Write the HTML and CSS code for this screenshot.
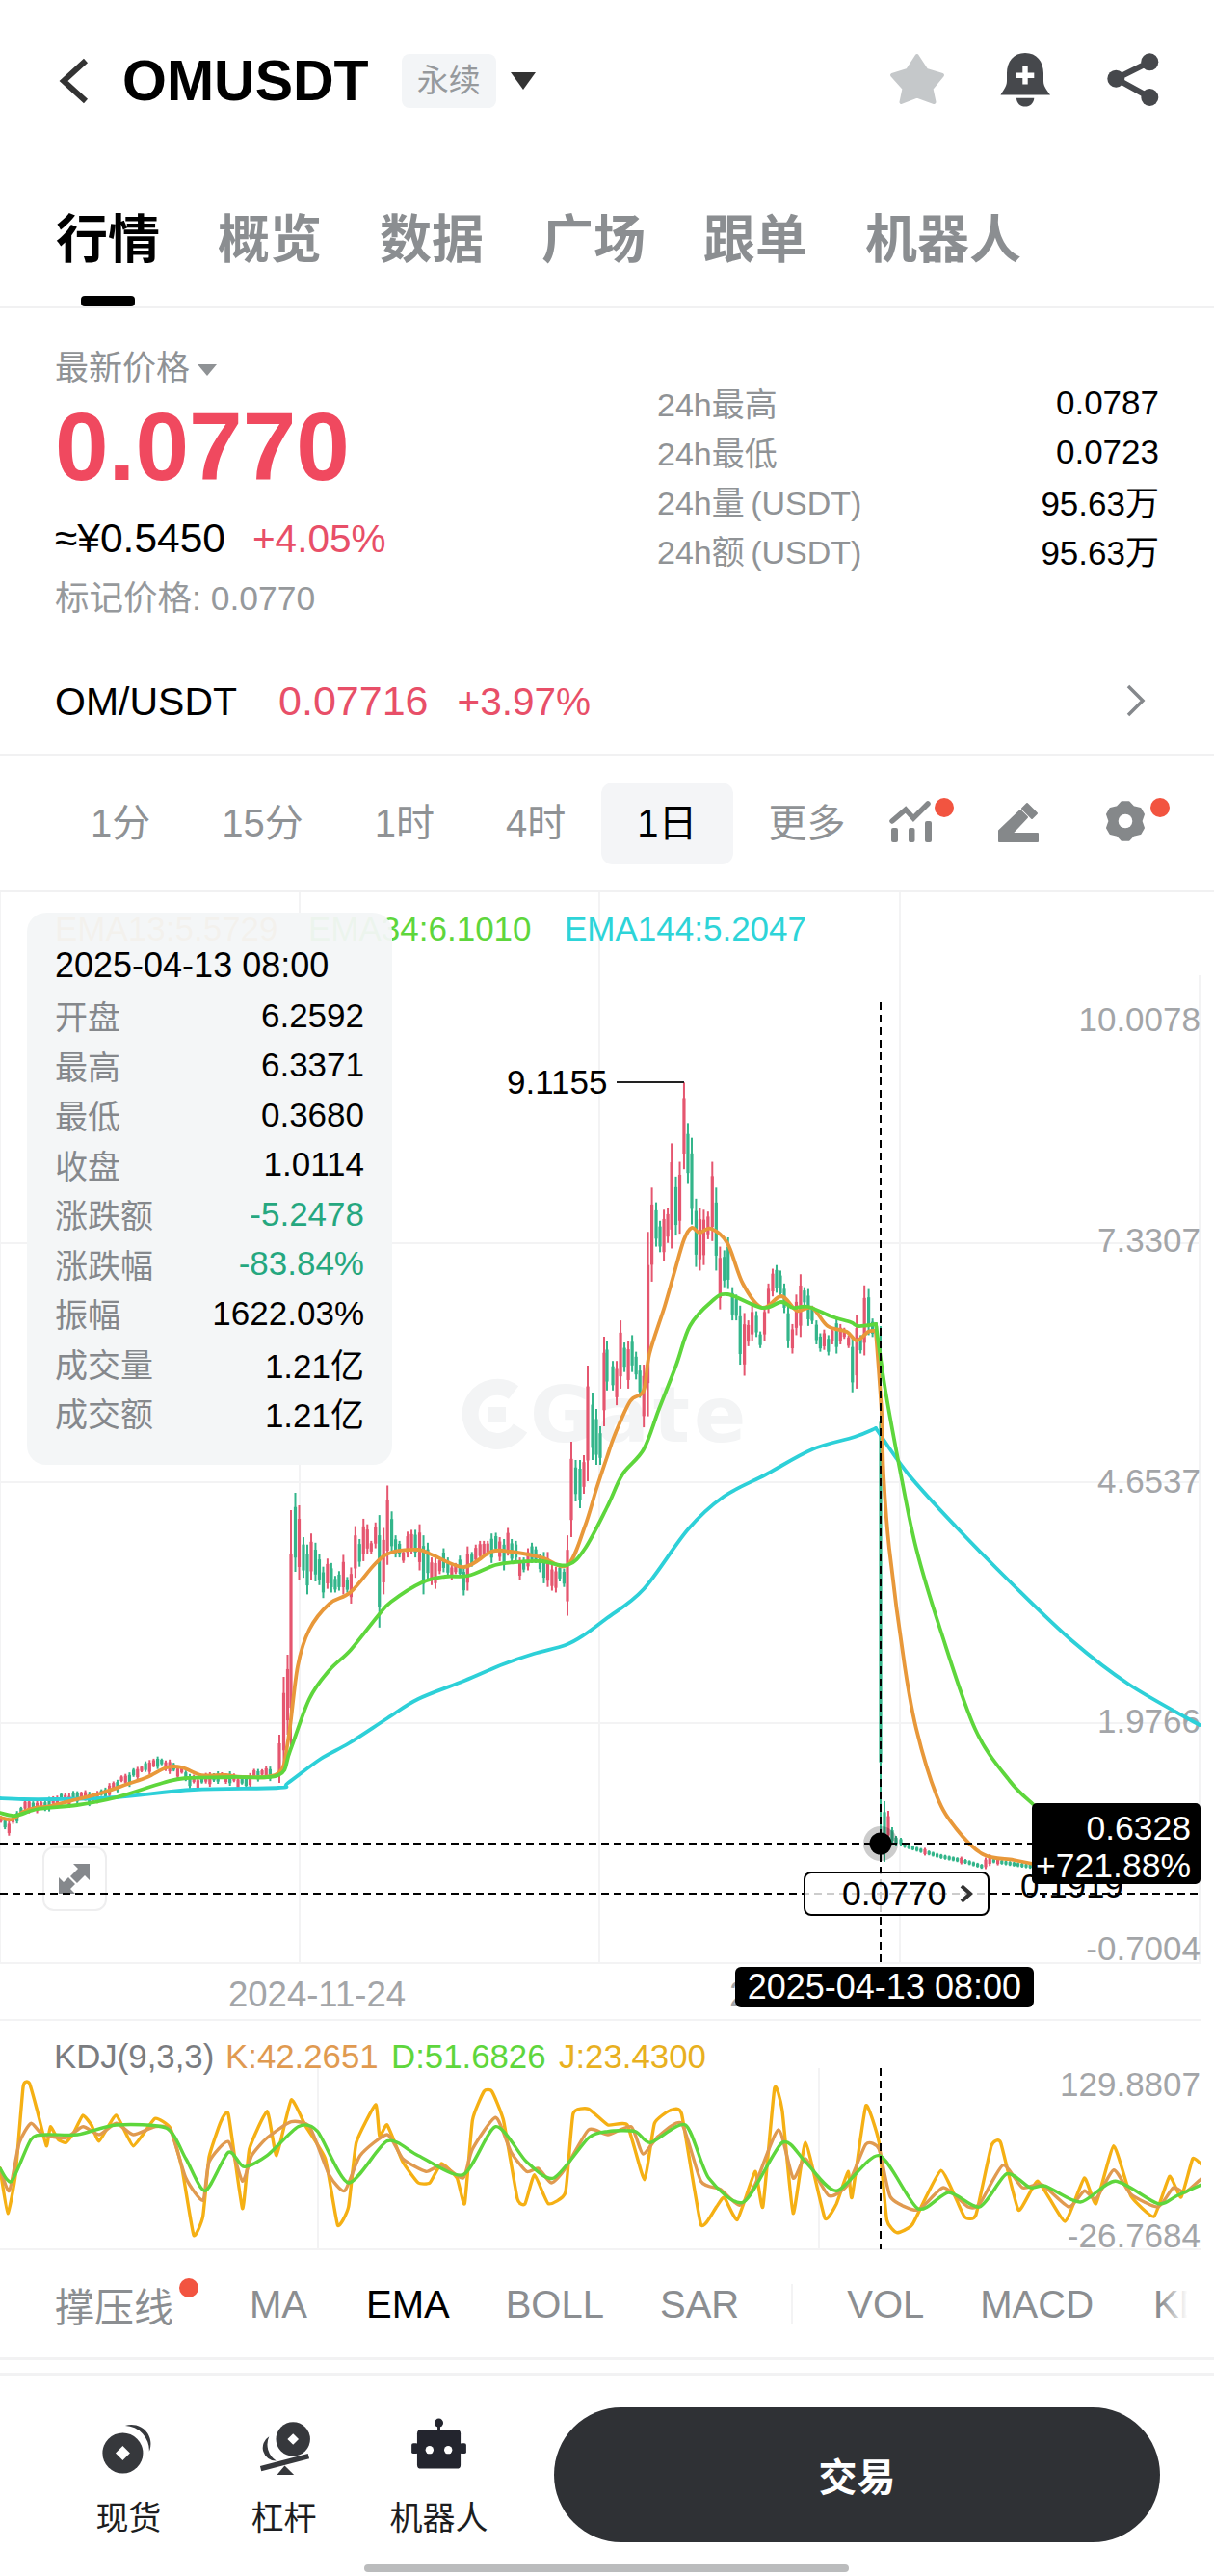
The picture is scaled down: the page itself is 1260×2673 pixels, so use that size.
FILE: index.html
```html
<!DOCTYPE html>
<html lang="zh-CN">
<head>
    <meta charset="UTF-8">
    <meta name="viewport" content="width=device-width, initial-scale=1.0">
    <title>OMUSDT</title>
    <link rel="stylesheet" href="styles.css">
</head>
<body>
<div class="page">

    <header class="topbar">
        <svg class="back" viewBox="0 0 34 50"><polyline points="29,4 6,25 29,46"/></svg>
        <span class="symbol">OMUSDT</span>
        <span class="badge">永续</span>
        <span class="caret"></span>
        <div class="top-icons">
            <svg class="ico-star" viewBox="921 54 60 60"><path d="M951.7 58 L961.5 73 L978 78 L966.500 92 L969.500 106 L951.700 99.700 L935.500 106 L938.500 92 L926 78 L942 73 Z"/></svg>
            <svg class="ico-bell" viewBox="1038 54 54 60"><path d="M1064 55 C1076 55 1083 64 1083 76 V84 C1083 90 1087 94 1090 98.500 H1038.500 C1041 94 1045 90 1045 84 V76 C1045 64 1052 55 1064 55 Z"/><path d="M1055 101.700 H1073.300 C1073 107 1069 110.500 1064 110.500 C1059 110.500 1055 107 1055 101.700 Z"/><path class="plus" d="M1061.300 69 H1066.700 V75.600 H1073.300 V81 H1066.700 V87.600 H1061.300 V81 H1054.700 V75.600 H1061.300 Z"/></svg>
            <svg class="ico-share" viewBox="1149 54 54 60"><polyline points="1193.300,64.300 1158.300,81.700 1193.300,101"/><circle cx="1193.300" cy="64.300" r="9"/><circle cx="1193.300" cy="101" r="9"/><circle cx="1158.300" cy="81.700" r="9"/></svg>
        </div>
    </header>

    <nav class="tabs">
        <a class="tab active">行情</a>
        <a class="tab">概览</a>
        <a class="tab">数据</a>
        <a class="tab">广场</a>
        <a class="tab">跟单</a>
        <a class="tab">机器人</a>
    </nav>

    <section class="quote">
        <div class="quote-left">
            <div class="latest-label">最新价格<span class="mini-caret"></span></div>
            <div class="last-price">0.0770</div>
            <div class="fiat"><span>≈¥0.5450</span><span class="up fiat-change">+4.05%</span></div>
            <div class="mark">标记价格: 0.0770</div>
        </div>
        <dl class="stats">
            <div class="stat"><dt>24h最高</dt><dd>0.0787</dd></div>
            <div class="stat"><dt>24h最低</dt><dd>0.0723</dd></div>
            <div class="stat"><dt>24h量 (USDT)</dt><dd>95.63万</dd></div>
            <div class="stat"><dt>24h额 (USDT)</dt><dd>95.63万</dd></div>
        </dl>
    </section>

    <section class="spot">
        <span class="spot-name">OM/USDT</span>
        <span class="spot-price up">0.07716</span>
        <span class="spot-change up">+3.97%</span>
        <svg class="spot-arrow" viewBox="0 0 22 36"><polyline points="3,3 18,18 3,33"/></svg>
    </section>

    <section class="frames">
        <span class="frame">1分</span>
        <span class="frame">15分</span>
        <span class="frame">1时</span>
        <span class="frame">4时</span>
        <span class="frame current">1日</span>
        <span class="frame">更多</span>
        <div class="frame-tools">
            <span class="tool dotted">
                <svg viewBox="0 0 48 48"><polyline class="zig" points="4,22 18,10 26,19 41,4"/><rect x="3" y="29" width="7" height="15" rx="2"/><rect x="21" y="29" width="6.500" height="15" rx="2"/><rect x="38" y="22" width="7" height="22" rx="2"/></svg>
            </span>
            <span class="tool">
                <svg viewBox="0 0 48 48"><path class="soft" d="M3 32 L25 11 L32 18 L16 35 H43 V43 H3 Z"/><path class="soft" d="M32 4 L42 14 L37 19 L27 9 Z"/></svg>
            </span>
            <span class="tool dotted">
                <svg viewBox="0 0 48 48"><polygon class="soft" points="18.400,2.300 25.600,2.300 30.300,7.300 37.600,9 41,15 38.600,22 41,29 37.600,35 30.300,36.700 25.600,41.700 18.400,41.700 13.700,36.700 6.400,35 3,29 5.400,22 3,15 6.400,9 13.700,7.300"/><circle class="hole" cx="22" cy="22" r="7.300"/></svg>
            </span>
        </div>
    </section>

    <section class="chart">
        <svg id="plot" class="plot" viewBox="0 926 1260 1410">
            <defs>
                <clipPath id="kdjClip"><rect x="0" y="2096" width="1246" height="238"/></clipPath>
            </defs>
            <g id="grid" class="grid"></g>
            <g class="watermark">
                <path d="M533 1445 A28 28 0 1 0 540 1482" />
                <rect x="507" y="1460" width="18" height="16"/>
                <text x="550" y="1496">Gate</text>
            </g>
            <text class="legend c-orange" x="57" y="976">EMA13:5.5729</text>
            <text class="legend c-green" x="320" y="976">EMA34:6.1010</text>
            <text class="legend c-cyan" x="586" y="976">EMA144:5.2047</text>

            <text class="axis" x="1246" y="1070">10.0078</text>
            <text class="axis" x="1246" y="1299">7.3307</text>
            <text class="axis" x="1246" y="1549">4.6537</text>
            <text class="axis" x="1246" y="1798">1.9766</text>
            <text class="axis" x="1246" y="2034">-0.7004</text>
            <text class="axis" x="1246" y="2175">129.8807</text>
            <text class="axis" x="1246" y="2332">-26.7684</text>
            <text class="date-axis" x="237" y="2082">2024-11-24</text>
            <text class="date-axis" x="757" y="2082">2</text>

            <g id="candles"></g>
            <g id="lines"></g>
            <g id="kdjLines" clip-path="url(#kdjClip)"></g>

            <text class="peak" x="526" y="1135">9.1155</text>
            <line class="peak-line" x1="640" y1="1123" x2="710" y2="1123"/>
            <text class="peak" x="1059" y="1969">0.1919</text>

            <line class="cross" x1="914" y1="1040" x2="914" y2="2037"/>
            <line class="cross" x1="914" y1="2146" x2="914" y2="2334"/>

            <g class="expand">
                <rect x="45" y="1917" width="65" height="65" rx="11"/>
                <path d="M93 1934 V1951 L88 1946 L80 1954 L73 1947 L81 1939 L76 1934 Z"/>
                <path d="M61 1965 V1948 L66 1953 L71 1948 L78 1955 L73 1960 L78 1965 Z"/>
            </g>
            <line class="cross" x1="0" y1="1913" x2="1245" y2="1913"/>
            <line class="cross" x1="0" y1="1965" x2="1245" y2="1965"/>

            <circle class="halo" cx="914" cy="1913" r="18"/>
            <circle cx="914" cy="1913" r="11.500"/>

            <rect class="price-box" x="835" y="1943" width="191" height="44" rx="7"/>
            <text class="peak tag-num" x="874" y="1977">0.0770</text>
            <polyline class="price-arrow" points="998,1957 1007,1965 998,1973"/>

            <rect x="1071" y="1871" width="175" height="84" rx="5"/>
            <text class="tag" x="1236" y="1909">0.6328</text>
            <text class="tag" x="1236" y="1948">+721.88%</text>

            <rect x="763" y="2041" width="310" height="42" rx="6"/>
            <text class="tag tag-date" x="1060" y="2074">2025-04-13 08:00</text>

            <text class="legend kdj c-kdj" x="56" y="2146">KDJ(9,3,3)</text>
            <text class="legend kdj c-k" x="234" y="2146">K:42.2651</text>
            <text class="legend kdj c-green" x="406" y="2146">D:51.6826</text>
            <text class="legend kdj c-j" x="580" y="2146">J:23.4300</text>
        </svg>

        <div class="detail">
            <div class="detail-date">2025-04-13 08:00</div>
            <div class="detail-row"><span>开盘</span><b>6.2592</b></div>
            <div class="detail-row"><span>最高</span><b>6.3371</b></div>
            <div class="detail-row"><span>最低</span><b>0.3680</b></div>
            <div class="detail-row"><span>收盘</span><b>1.0114</b></div>
            <div class="detail-row"><span>涨跌额</span><b class="down">-5.2478</b></div>
            <div class="detail-row"><span>涨跌幅</span><b class="down">-83.84%</b></div>
            <div class="detail-row"><span>振幅</span><b>1622.03%</b></div>
            <div class="detail-row"><span>成交量</span><b>1.21亿</b></div>
            <div class="detail-row"><span>成交额</span><b>1.21亿</b></div>
        </div>
    </section>

    <section class="indicators">
        <span class="ind ind-first">撑压线</span>
        <span class="ind ind-ma">MA</span>
        <span class="ind selected">EMA</span>
        <span class="ind">BOLL</span>
        <span class="ind">SAR</span>
        <span class="ind-line"></span>
        <span class="ind">VOL</span>
        <span class="ind">MACD</span>
        <span class="ind ind-last">KDJ</span>
        <span class="ind-fade"></span>
    </section>
    <div class="spacer"></div>

    <footer class="bottom">
        <div class="actions">
            <a class="action">
                <svg viewBox="0 0 60 64"><circle cx="23.200" cy="38.700" r="21.700"/><path class="hole" d="M23.200 31 L30.900 38.700 L23.200 46.400 L15.500 38.700 Z"/><path d="M25.800 9.300 A20.700 20.700 0 0 1 51.500 37 A26.700 26.700 0 0 0 25.800 9.300 Z"/></svg>
                <span>现货</span>
            </a>
            <a class="action">
                <svg viewBox="0 0 60 64"><circle cx="39.500" cy="23.700" r="18.300"/><path class="hole" d="M39.500 17.700 L45.500 23.700 L39.500 29.700 L33.500 23.700 Z"/><path d="M13.800 21 A14 14 0 0 0 21.500 47 A20.700 20.700 0 0 1 13.800 21 Z"/><line class="beam" x1="4.800" y1="55.300" x2="56.200" y2="42"/><polygon points="30.500,52 22.200,62 40.500,62"/></svg>
                <span>杠杆</span>
            </a>
            <a class="action robot">
                <svg viewBox="0 0 60 64"><circle cx="29.500" cy="6.300" r="4.700"/><rect x="28" y="8" width="3" height="7"/><rect x="6.200" y="13.700" width="46.600" height="41.600" rx="4"/><rect x="0.200" y="28" width="7" height="11.300" rx="2"/><rect x="51.800" y="28" width="7" height="11.300" rx="2"/><circle class="hole" cx="19.500" cy="35.300" r="4.300"/><circle class="hole" cx="39.500" cy="35.300" r="4.300"/></svg>
                <span>机器人</span>
            </a>
        </div>
        <button class="trade">交易</button>
    </footer>
    <div class="home-bar"></div>

</div>
<script src="chart.js"></script>
</body>
</html>
```

FILE: styles.css
```css
*{
    margin: 0;
    padding: 0;
    box-sizing: border-box;
}

body{
    width: 1260px;
    height: 2673px;
    overflow: hidden;
    background: #fff;
    color: #000;
    font-family: "Liberation Sans", "Noto Sans CJK SC", sans-serif;
}

.page{
    width: 1260px;
    height: 2673px;
}

.up{ color: #e84f68; }
.down{ color: #25a77f; }

/* top bar */
.topbar{
    height: 168px;
    display: flex;
    align-items: center;
    padding: 0 57px 0 60px;
}
.back{
    width: 34px;
    height: 50px;
    fill: none;
    stroke: #333;
    stroke-width: 6;
}
.symbol{
    margin-left: 33px;
    font-size: 59px;
    font-weight: bold;
}
.badge{
    margin-left: 34px;
    width: 98px;
    height: 56px;
    line-height: 56px;
    text-align: center;
    border-radius: 8px;
    background: #f3f5f7;
    color: #96999c;
    font-size: 33px;
}
.caret{
    margin-left: 15px;
    border-left: 13px solid transparent;
    border-right: 13px solid transparent;
    border-top: 18px solid #333;
}
.top-icons{
    margin-left: auto;
    display: flex;
    align-items: center;
    gap: 57px;
}
.ico-star{ width: 60px; height: 60px; fill: #c5c8ca; stroke: #c5c8ca; stroke-width: 4; stroke-linejoin: round; }
.ico-bell{ width: 54px; height: 60px; fill: #46484c; }
.ico-bell .plus{ fill: #fff; }
.ico-share{ width: 54px; height: 60px; fill: #46484c; stroke: none; }
.ico-share polyline{ fill: none; stroke: #46484c; stroke-width: 6; }

/* tabs */
.tabs{
    height: 152px;
    display: flex;
    gap: 60px;
    padding: 50px 0 0 58px;
    border-bottom: 2px solid #f1f1f2;
}
.tab{
    position: relative;
    height: 62px;
    line-height: 62px;
    font-size: 54px;
    font-weight: bold;
    color: #8b8e91;
}
.tab.active{ color: #000; }
.tab.active::after{
    content: "";
    position: absolute;
    left: 26px;
    top: 89px;
    width: 56px;
    height: 11px;
    border-radius: 4px;
    background: #000;
}

/* price block */
.quote{
    height: 358px;
    display: flex;
    justify-content: space-between;
    padding: 40px 57px 0;
}
.latest-label{
    height: 44px;
    line-height: 44px;
    font-size: 35px;
    color: #8f9295;
}
.mini-caret{
    display: inline-block;
    margin: 0 0 4px 8px;
    border-left: 10px solid transparent;
    border-right: 10px solid transparent;
    border-top: 12px solid #8f9295;
}
.last-price{
    height: 110px;
    margin-top: 4px;
    line-height: 110px;
    font-size: 100px;
    font-weight: bold;
    color: #f0495f;
}
.fiat{
    height: 50px;
    margin-top: 16px;
    line-height: 50px;
    font-size: 42.500px;
    display: flex;
    align-items: baseline;
    gap: 28px;
}
.fiat-change{ font-size: 40.500px; }
.mark{
    height: 44px;
    margin-top: 15px;
    line-height: 44px;
    font-size: 35.500px;
    color: #96999c;
}
.stats{
    width: 521px;
    padding-top: 32px;
}
.stat{
    height: 51px;
    display: flex;
    justify-content: space-between;
    align-items: center;
    font-size: 34px;
}
.stat dt{ color: #909396; word-spacing: -3px; }
.stat dd{ font-size: 35px; }

/* spot row */
.spot{
    height: 106px;
    display: flex;
    align-items: baseline;
    padding: 25px 70px 0 57px;
    font-size: 41px;
    border-bottom: 2px solid #f1f1f2;
}
.spot-price{ margin-left: 43px; font-size: 43px; }
.spot-change{ margin-left: 30px; font-size: 40.500px; }
.spot-arrow{
    margin-left: auto;
    width: 22px;
    height: 36px;
    align-self: flex-start;
    margin-top: 6px;
    fill: none;
    stroke: #85888c;
    stroke-width: 3.500;
}

/* time frames */
.frames{
    height: 142px;
    display: flex;
    align-items: center;
    padding-left: 57px;
    border-bottom: 2px solid #f1f1f2;
}
.frame{
    height: 85px;
    line-height: 85px;
    padding: 0 37px;
    font-size: 40px;
    color: #8f9295;
}
.frame.current{
    color: #000;
    background: #f4f5f7;
    border-radius: 12px;
}
.frame-tools{
    margin-left: auto;
    margin-right: 66px;
    display: flex;
    gap: 64px;
}
.tool{
    position: relative;
    width: 48px;
    height: 48px;
}
.tool svg{ width: 48px; height: 48px; fill: #85888a; }
.tool .zig{ fill: none; stroke: #85888a; stroke-width: 5.500; stroke-linecap: round; }
.tool .soft{ stroke: #85888a; stroke-width: 2; stroke-linejoin: round; }
.tool .hole{ fill: #fff; }
.dotted::after{
    content: "";
    position: absolute;
    right: -20px;
    top: -2px;
    width: 20px;
    height: 20px;
    border-radius: 50%;
    background: #f25440;
}

/* chart */
.chart{
    position: relative;
    height: 1410px;
}
.plot{
    position: absolute;
    left: 0;
    top: 0;
    width: 1260px;
    height: 1410px;
    font-family: "Liberation Sans", "Noto Sans CJK SC", sans-serif;
}
.grid line{ stroke: #f3f3f4; stroke-width: 2; }
.watermark{ fill: #f3f4f5; }
.watermark path{ fill: none; stroke: #f3f4f5; stroke-width: 17; }
.watermark text{ font-family: "DejaVu Sans", sans-serif; font-size: 80px; letter-spacing: 4px; font-weight: bold; }
.legend{ font-size: 35px; }
.legend.kdj{ font-size: 34.800px; }
.c-orange{ fill: #e8a03e; }
.c-green{ fill: #5ed63c; }
.c-cyan{ fill: #2dd4d8; }
.c-kdj{ fill: #7a7c80; }
.c-k{ fill: #e09a50; }
.c-j{ fill: #e8b020; }
.axis{ font-size: 35px; fill: #a3a5a8; text-anchor: end; }
.date-axis{ font-size: 36.500px; fill: #a3a5a8; }
.peak{ font-size: 35px; fill: #000; }
.tag-num{ font-size: 35.500px; }
.peak-line{ stroke: #222; stroke-width: 2; }
.cross{ stroke: #000; stroke-width: 2; stroke-dasharray: 8 5; }
.expand rect{ fill: #fff; stroke: #eeeeef; stroke-width: 2; }
.expand path{ fill: #85888c; }
.halo{ fill: rgba(0, 0, 0, 0.2); }
.price-box{ fill: rgba(255, 255, 255, 0.8); stroke: #000; stroke-width: 2; }
.price-arrow{ fill: none; stroke: #333; stroke-width: 4; }
.tag{ font-size: 35.500px; fill: #fff; text-anchor: end; }
.tag-date{ font-size: 36px; }

.detail{
    position: absolute;
    left: 28px;
    top: 21px;
    width: 379px;
    height: 573px;
    padding: 29px 29px 0;
    border-radius: 20px;
    background: rgba(243, 245, 247, 0.95);
}
.detail-date{
    height: 52px;
    line-height: 52px;
    font-size: 36px;
    white-space: nowrap;
}
.detail-row{
    height: 51.500px;
    display: flex;
    justify-content: space-between;
    align-items: center;
    font-size: 34px;
}
.detail-row span{ color: #85888c; }
.detail-row b{ font-weight: normal; font-size: 35px; }

/* indicator row */
.indicators{
    position: relative;
    height: 113px;
    display: flex;
    align-items: center;
    gap: 58px;
    padding-left: 57px;
    overflow: hidden;
    border-bottom: 3px solid #f2f2f3;
    font-size: 40px;
    color: #8b8e91;
}
.ind{ flex: none; }
.ind.selected{ color: #000; }
.ind-first{
    position: relative;
    margin-right: 21px;
    font-size: 41px;
}
.ind-ma{ margin-right: 3px; }
.ind-first::after{
    content: "";
    position: absolute;
    right: -26px;
    top: 3px;
    width: 20px;
    height: 20px;
    border-radius: 50%;
    background: #f25440;
}
.ind-line{
    flex: none;
    width: 2px;
    height: 42px;
    margin-left: -4px;
    margin-right: -2px;
    background: #f3f3f4;
}
.ind-last{ margin-left: 4px; }
.ind-fade{
    position: absolute;
    left: 1205px;
    top: 0;
    width: 55px;
    height: 100%;
    background: linear-gradient(to right, rgba(255, 255, 255, 0), #fff 50%);
}
.spacer{
    height: 16px;
    border-bottom: 3px solid #f2f2f3;
}

/* bottom bar */
.bottom{
    height: 173px;
    display: flex;
    padding: 33px 56px 0 53px;
}
.actions{ display: flex; }
.action{
    width: 161px;
    height: 140px;
    display: flex;
    flex-direction: column;
    align-items: center;
    font-size: 34px;
    color: #1c1d20;
}
.action svg{
    width: 60px;
    height: 64px;
    margin-top: 10px;
    fill: #36383c;
}
.action .hole{ fill: #fff; }
.action .beam{ stroke: #36383c; stroke-width: 5.500; }
.action.robot svg{ fill: #23252e; }
.action span{
    margin-top: 18px;
    line-height: 50px;
}
.trade{
    flex: 1;
    height: 140px;
    margin-left: 39px;
    border: none;
    border-radius: 70px;
    background: #2f3135;
    color: #fff;
    font-family: inherit;
    font-size: 40px;
    font-weight: bold;
}
.home-bar{
    width: 503px;
    height: 8px;
    margin: 23px 0 0 378px;
    border-radius: 4px;
    background: #bbbcbd;
}
```

FILE: chart.js
```js
var NS = "http://www.w3.org/2000/svg";
var RED = "#e5566f", GREEN = "#33b58a";

function add(parent, tag, attrs){
    var el = document.createElementNS(NS, tag);
    for(var k in attrs){ el.setAttribute(k, attrs[k]); }
    parent.appendChild(el);
    return el;
}

// grid
var grid = document.getElementById("grid");
[1290, 1538, 1788, 2037, 2096, 2334].forEach(function(y){
    add(grid, "line", {x1: 0, y1: y, x2: 1246, y2: y});
});
[0, 311, 622, 934].forEach(function(x){
    add(grid, "line", {x1: x, y1: 926, x2: x, y2: 2037});
});
add(grid, "line", {x1: 1245, y1: 1012, x2: 1245, y2: 2037});
[330, 850].forEach(function(x){
    add(grid, "line", {x1: x, y1: 2146, x2: x, y2: 2334});
});

// candles
var candles = document.getElementById("candles");
function bar(x, top, bottom, up){
    var color = up ? RED : GREEN;
    var h = bottom - top;
    add(candles, "rect", {x: x - 1, y: top, width: 2, height: h, fill: color});
    add(candles, "rect", {x: x - 1.6, y: top + h * 0.18, width: 3.2, height: h * 0.64, fill: color});
}

function lerp(points, x){
    for(var i = 1; i < points.length; i++){
        if(x <= points[i][0]){
            var a = points[i-1], b = points[i];
            return a[1] + (b[1] - a[1]) * (x - a[0]) / (b[0] - a[0]);
        }
    }
    return points[points.length-1][1];
}

// quiet start of the chart, numbers read off the picture
var startTop = [[0,1884],[10,1888],[28,1865],[40,1869],[60,1861],[84,1857],[100,1859],[120,1846],[133,1838],[161,1822],[177,1826],[205,1844],[217,1838],[241,1838],[253,1846],[261,1836],[281,1832]];
for(var i = 0; i < 68; i++){
    var sx = 1 + i * 4.17;
    var st = lerp(startTop, sx);
    var sh = 7 + (i * 7 % 5) * 2;
    bar(sx, st + (i % 3), st + (i % 3) + sh, (i * 5 % 7) < 4);
}

// first jump, x and y already on the page
[[290,1800,1850,1],[294.5,1740,1833,1],[298.5,1717,1800,1],[302,1567,1817,1],[306.5,1549,1631,0],[310.5,1562,1640,1]].forEach(function(c){
    bar(c[0], c[1], c[2], c[3]);
});

// plateau, crop coordinates of the lower left part
var plateau = [[784,170,280,0],[794,190,325,0],[804,160,285,1],[815,185,290,0],[825,215,300,0],[835,250,335,0],[846,228,310,1],[856,240,320,0],[866,275,320,0],[876,262,315,0],[887,218,325,1],[897,278,320,0],[907,252,350,1],[918,140,280,1],[929,175,250,0],[939,120,235,1],[949,135,215,1],[959,180,215,1],[970,130,200,1],[980,110,415,0],[991,145,325,1],[1001,30,245,1],[1012,100,215,0],[1022,165,225,0],[1032,180,225,0],[1042,205,240,1],[1053,155,225,1],[1063,150,215,1],[1073,150,225,0],[1084,135,260,1],[1094,165,325,0],[1105,185,285,0],[1115,225,300,1],[1125,225,310,1],[1136,225,270,1],[1146,200,265,0],[1157,225,275,0],[1167,245,285,1],[1177,240,270,1],[1188,220,280,0],[1198,250,328,0],[1208,195,315,1],[1219,210,250,0],[1229,190,240,1],[1240,180,230,1],[1250,180,225,1],[1260,180,220,1],[1270,160,240,0],[1281,158,210,0],[1291,170,235,1],[1302,175,260,0],[1312,145,220,1],[1322,175,240,0],[1333,180,235,0],[1343,225,285,1],[1353,225,265,0],[1364,200,260,1],[1374,185,240,0],[1384,195,240,0],[1395,215,265,0],[1405,210,295,0],[1415,210,305,1],[1426,245,315,1],[1436,250,320,1],[1446,245,290,0],[1457,255,305,0],[1466,165,383,1]];
plateau.forEach(function(c){
    bar(c[0] / 2.489, 1530 + c[1] / 2.613, 1530 + c[2] / 2.613, c[3]);
});

// climb
[[593,1496,1595,1],[597.5,1515,1558,0],[602,1515,1565,0],[606,1510,1550,1],[610,1417,1537,1],[615,1445,1515,0],[619,1462,1520,0],[623,1480,1520,0],[627,1387,1480,1]].forEach(function(c){
    bar(c[0], c[1], c[2], c[3]);
});

// top of the chart, crop coordinates of the upper right part
var peak = [[0,1205,1340,0],[15,1260,1340,0],[25,1260,1380,1],[35,1150,1335,1],[45,1210,1290,0],[55,1205,1335,1],[65,1190,1290,0],[75,1235,1310,0],[85,1270,1360,0],[95,1270,1440,1],[106,910,1410,1],[116,790,1045,1],[127,830,950,0],[137,880,965,0],[147,850,990,1],[157,845,940,1],[167,670,955,1],[178,760,920,0],[188,720,915,1],[199,505,740,1],[209,615,780,0],[219,655,890,0],[230,820,1005,0],[240,845,1015,1],[250,850,1000,1],[261,855,930,1],[272,720,935,1],[282,790,1015,0],[292,950,1120,1],[303,960,1060,0],[313,925,1065,0],[324,1060,1150,0],[334,1080,1150,0],[344,1110,1270,0],[355,1130,1300,1],[365,1150,1220,1],[375,1110,1205,1],[386,1125,1195,0],[396,1180,1225,0],[407,1110,1205,1],[417,1050,1130,1],[428,1010,1085,1],[438,1000,1075,0],[448,1015,1090,0],[458,1050,1130,0],[468,1110,1225,0],[479,1160,1240,1],[489,1080,1190,1],[500,1025,1195,1],[510,1060,1110,0],[520,1065,1165,0],[530,1110,1160,0],[541,1150,1215,0],[551,1185,1235,0],[561,1175,1230,1],[572,1190,1245,0],[582,1170,1215,1],[593,1140,1240,0],[603,1160,1215,1],[613,1170,1200,1],[624,1190,1225,1],[634,1195,1345,0],[645,1135,1335,1],[655,1190,1240,0],[665,1055,1245,1],[676,1065,1190,0],[686,1145,1195,0],[696,1155,1210,0]];
peak.forEach(function(c){
    bar(630 + c[0] / 2.489, 930 + c[1] / 2.613, 930 + c[2] / 2.613, c[3]);
});

// the crash candle and what comes after it
bar(914, 1376, 1928, 0);
[[918,1869,1932,0],[922,1879,1910,1],[926,1896,1913,0],[930,1905,1915,0],[935,1907,1915,0]].forEach(function(c){
    bar(c[0], c[1], c[2], c[3]);
});
var tail = [[939,1915],[975,1926],[1000,1931],[1020,1937],[1026,1930],[1050,1934],[1072,1937]];
for(var t = 0; t < 32; t++){
    var tx = 939 + t * 4.2;
    var ty = lerp(tail, tx);
    var tall = (tx > 1022 && tx < 1028) ? 12 : (t % 9 == 5 ? 8 : 5);
    bar(tx, ty - tall / 2, ty + tall / 2, t % 9 == 5 || tall == 12);
}

// smooth line through points, a bigger k keeps it closer to straight segments
function smooth(p, k){
    k = k || 6;
    var d = "M" + p[0][0].toFixed(1) + " " + p[0][1].toFixed(1);
    for(var i = 0; i < p.length - 1; i++){
        var a = p[i-1] || p[i], b = p[i], c = p[i+1], e = p[i+2] || c;
        d += " C" + (b[0] + (c[0] - a[0]) / k).toFixed(1) + " " + (b[1] + (c[1] - a[1]) / k).toFixed(1) +
             " " + (c[0] - (e[0] - b[0]) / k).toFixed(1) + " " + (c[1] - (e[1] - b[1]) / k).toFixed(1) +
             " " + c[0].toFixed(1) + " " + c[1].toFixed(1);
    }
    return d;
}
var lines = document.getElementById("lines");
var kdjLines = document.getElementById("kdjLines");
function curve(parent, points, color, width, k){
    add(parent, "path", {d: smooth(points, k), fill: "none", stroke: color, "stroke-width": width, "stroke-linejoin": "round", "stroke-linecap": "round"});
}

// each EMA turns sharply at the crash, so it is drawn in two pieces
var ema144 = [[0,1866],[24,1867],[56,1867],[121,1865],[201,1857],[289,1855],[299,1850],[333,1825],[362,1809],[402,1783],[434,1763],[482,1744],[522,1727],[554,1716],[587,1707],[607,1696],[630,1679],[668,1649],[714,1587],[751,1553],[795,1530],[843,1504],[887,1491],[909,1482]];
var ema144b = [[909,1482],[943,1530],[992,1584],[1052,1645],[1112,1702],[1172,1748],[1245,1790]];
var ema34 = [[0,1881],[16,1884],[40,1877],[80,1873],[121,1865],[169,1850],[193,1845],[241,1844],[289,1842],[301,1817],[321,1763],[342,1733],[364,1712],[392,1677],[406,1662],[438,1642],[462,1636],[486,1635],[514,1624],[534,1621],[562,1620],[589,1624],[607,1607],[630,1564],[646,1530],[668,1504],[684,1462],[702,1416],[716,1376],[738,1351],[755,1343],[791,1357],[811,1351],[823,1357],[839,1356],[863,1366],[883,1372],[891,1376],[909,1374]];
var ema34b = [[909,1374],[919,1443],[935,1530],[951,1607],[976,1691],[1012,1794],[1048,1848],[1072,1872]];
var ema13 = [[0,1886],[12,1888],[24,1880],[36,1876],[52,1874],[80,1867],[104,1861],[133,1851],[153,1844],[173,1834],[189,1834],[209,1842],[233,1842],[253,1844],[289,1840],[299,1806],[309,1729],[321,1691],[342,1664],[364,1652],[390,1622],[406,1611],[434,1608],[450,1614],[482,1626],[510,1610],[530,1610],[562,1616],[589,1624],[607,1584],[619,1545],[630,1512],[638,1489],[654,1454],[668,1443],[674,1405],[690,1355],[700,1320],[710,1286],[718,1274],[726,1279],[738,1275],[755,1290],[771,1332],[791,1357],[811,1345],[827,1360],[843,1357],[859,1376],[879,1382],[889,1391],[901,1382],[909,1381]];
var ema13b = [[909,1381],[915,1466],[917,1530],[923,1607],[939,1729],[951,1794],[972,1863],[992,1897],[1020,1924],[1052,1930],[1072,1934]];
curve(lines, ema144, "#2dd0d8", 3.8);
curve(lines, ema144b, "#2dd0d8", 3.8);
curve(lines, ema13, "#e8983a", 3.8);
curve(lines, ema13b, "#e8983a", 3.8);
curve(lines, ema34, "#5ed63c", 3.8);
curve(lines, ema34b, "#5ed63c", 3.8);

// KDJ, crop coordinates of the lower pane
function kdj(p){
    return p.map(function(q){ return [q[0] / 1.244, 2090 + q[1] / 3]; });
}
var jLine = [[0,480],[10,620],[20,500],[30,225],[38,215],[48,300],[60,410],[65,350],[75,390],[85,400],[95,370],[107,315],[118,345],[128,395],[150,315],[172,410],[200,325],[220,355],[235,480],[250,688],[262,630],[270,445],[285,335],[295,312],[313,605],[322,420],[345,302],[357,440],[376,267],[395,350],[420,450],[436,657],[450,600],[460,400],[485,282],[490,380],[500,345],[520,460],[540,525],[555,525],[570,465],[590,510],[600,590],[610,330],[625,240],[635,240],[650,330],[668,575],[678,590],[690,500],[708,590],[730,555],[740,310],[760,295],[785,345],[810,345],[832,515],[845,340],[865,300],[880,310],[905,655],[925,600],[935,570],[952,640],[975,490],[985,600],[1000,230],[1010,300],[1024,620],[1040,400],[1065,635],[1080,590],[1095,490],[1100,570],[1118,285],[1135,400],[1145,640],[1158,680],[1178,655],[1215,487],[1245,630],[1260,625],[1280,410],[1292,400],[1315,610],[1340,520],[1375,645],[1400,510],[1415,590],[1438,410],[1460,565],[1490,630],[1510,505],[1525,570],[1540,450],[1552,470]];
var kLine = [[0,480],[12,550],[25,400],[40,340],[55,375],[85,385],[107,350],[128,375],[150,340],[172,375],[200,350],[220,360],[240,510],[262,580],[270,460],[295,397],[313,520],[325,440],[345,385],[376,335],[400,352],[425,500],[445,550],[465,440],[500,375],[520,450],[550,490],[570,470],[598,510],[610,420],[640,322],[660,430],[680,490],[695,480],[712,525],[730,480],[760,360],[785,375],[815,350],[830,435],[850,380],[880,340],[905,520],[930,545],[955,595],[975,530],[1005,360],[1024,510],[1040,450],[1070,565],[1095,530],[1118,405],[1135,420],[1150,570],[1185,610],[1218,540],[1250,600],[1265,590],[1295,470],[1320,540],[1345,530],[1380,600],[1400,550],[1415,575],[1438,485],[1460,560],[1495,600],[1515,540],[1530,555],[1552,510]];
var dLine = [[0,480],[15,520],[40,390],[60,375],[100,375],[150,345],[215,355],[240,450],[265,550],[295,430],[315,475],[345,440],[385,350],[410,365],[450,525],[500,395],[540,440],[598,500],[640,350],[680,460],[715,510],[760,385],[785,365],[820,365],[840,400],[885,345],[915,510],[960,585],[1010,400],[1040,460],[1080,550],[1135,440],[1185,605],[1225,555],[1265,600],[1300,497],[1330,540],[1350,535],[1395,585],[1440,520],[1495,590],[1520,565],[1552,530]];
curve(kdjLines, kdj(jLine), "#f5b014", 3.4, 14);
curve(kdjLines, kdj(kLine), "#e09a50", 3.4, 10);
curve(kdjLines, kdj(dLine), "#5ed63c", 3.4, 8);
```
